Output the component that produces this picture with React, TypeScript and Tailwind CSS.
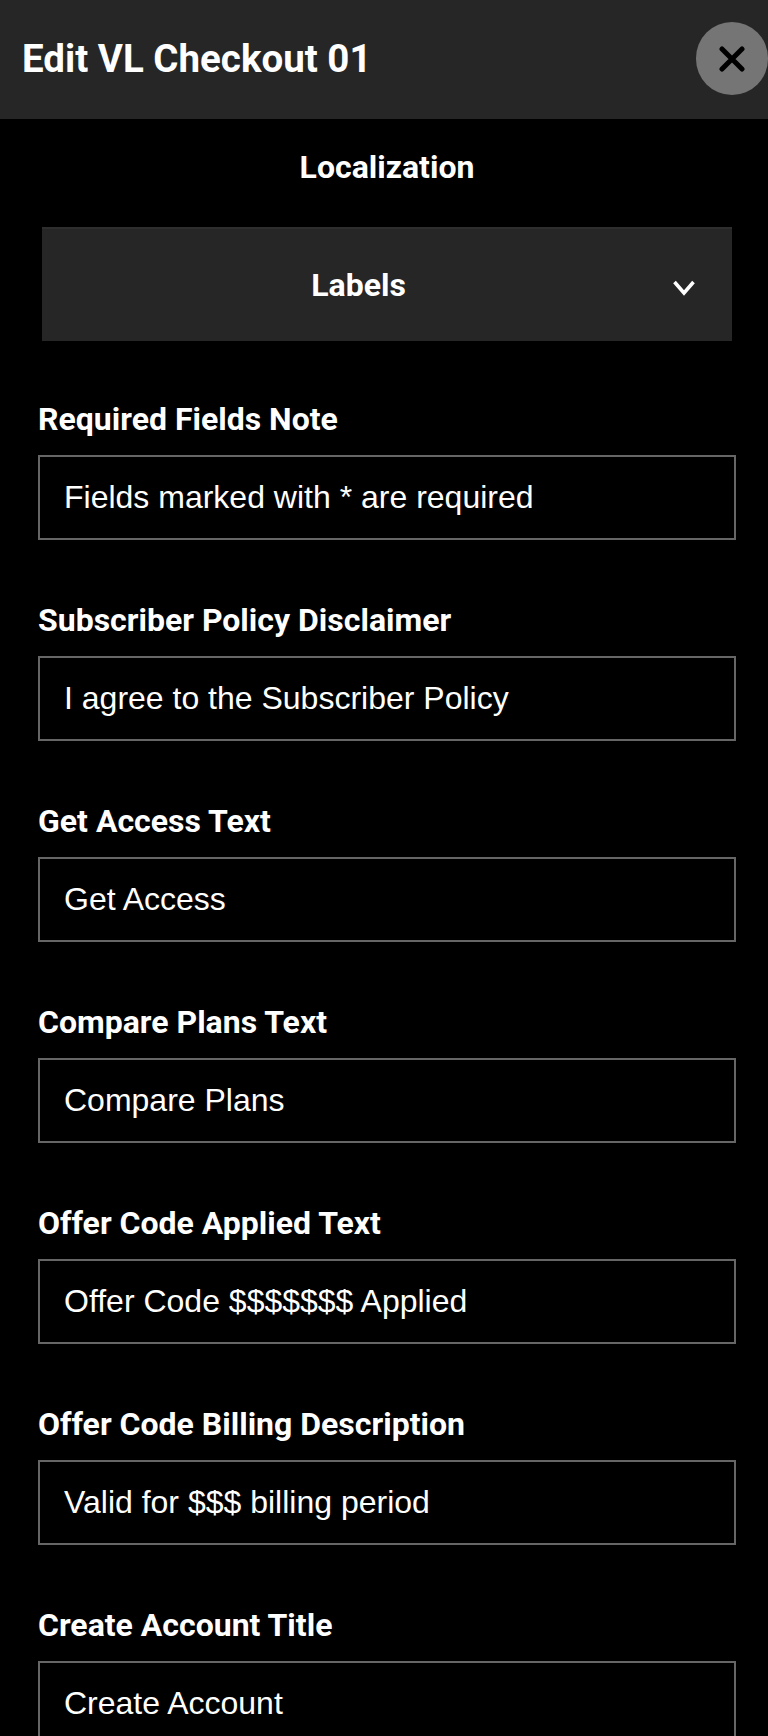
import React from "react";

// ---- FIELDS ----//
const fields = [
  { label: "Required Fields Note", value: "Fields marked with * are required" },
  { label: "Subscriber Policy Disclaimer", value: "I agree to the Subscriber Policy" },
  { label: "Get Access Text", value: "Get Access" },
  { label: "Compare Plans Text", value: "Compare Plans" },
  { label: "Offer Code Applied Text", value: "Offer Code $$$$$$$ Applied" },
  { label: "Offer Code Billing Description", value: "Valid for $$$ billing period" },
  { label: "Create Account Title", value: "Create Account" },
];

const roboto = "font-['Roboto',sans-serif]";

const Field = ({ label, value }: { label: string; value: string }) => (
  <div className="mb-[60px]">
    <label className={`${roboto} block h-[40px] text-[32px] leading-[40px] font-bold text-white`}>
      {label}
    </label>
    <input
      readOnly
      value={value}
      className="mt-[16px] block h-[85px] w-full border-2 border-[#666666] bg-black px-[24px] font-['Liberation_Sans',sans-serif] text-[32px] text-white outline-none"
    />
  </div>
);

export default function App() {
  return (
    <div className="h-[1736px] w-[768px] overflow-hidden bg-black">
      <header className="flex h-[119px] items-center justify-between bg-[#262626] pl-[22px]">
        <h1 className={`${roboto} -mt-[2px] text-[38.5px] font-bold text-white`}>Edit VL Checkout 01</h1>
        <button className="-mt-[2px] flex h-[73px] w-[72px] items-center justify-center rounded-full bg-[#757575]">
          <svg width="26" height="26" viewBox="0 0 26 26" fill="none">
            <path d="M3 3 L23 23 M23 3 L3 23" stroke="#000" strokeWidth="5" strokeLinecap="round" />
          </svg>
        </button>
      </header>

      {/* content is a little wider than the window, as in the source page */}
      <div className="w-[774px]">
        <h2 className={`${roboto} mt-[28px] text-center text-[32px] leading-[40px] font-bold text-white`}>
          Localization
        </h2>

        <div className="relative mx-[42px] mt-[40px] flex h-[114px] items-center justify-center border-t-2 border-[#2e2e2e] bg-[#262626] pr-[57px]">
          <span className={`${roboto} text-[32px] font-bold text-white`}>Labels</span>
          <svg className="absolute right-[36px] top-[49px]" width="24" height="20" viewBox="0 0 24 20" fill="none">
            <path d="M2.5 4 L12 15 L21.5 4" stroke="#fff" strokeWidth="3.5" />
          </svg>
        </div>

        <div className="mt-[58px] px-[38px]">
          {fields.map((f) => (
            <Field key={f.label} label={f.label} value={f.value} />
          ))}
        </div>
      </div>
    </div>
  );
}
